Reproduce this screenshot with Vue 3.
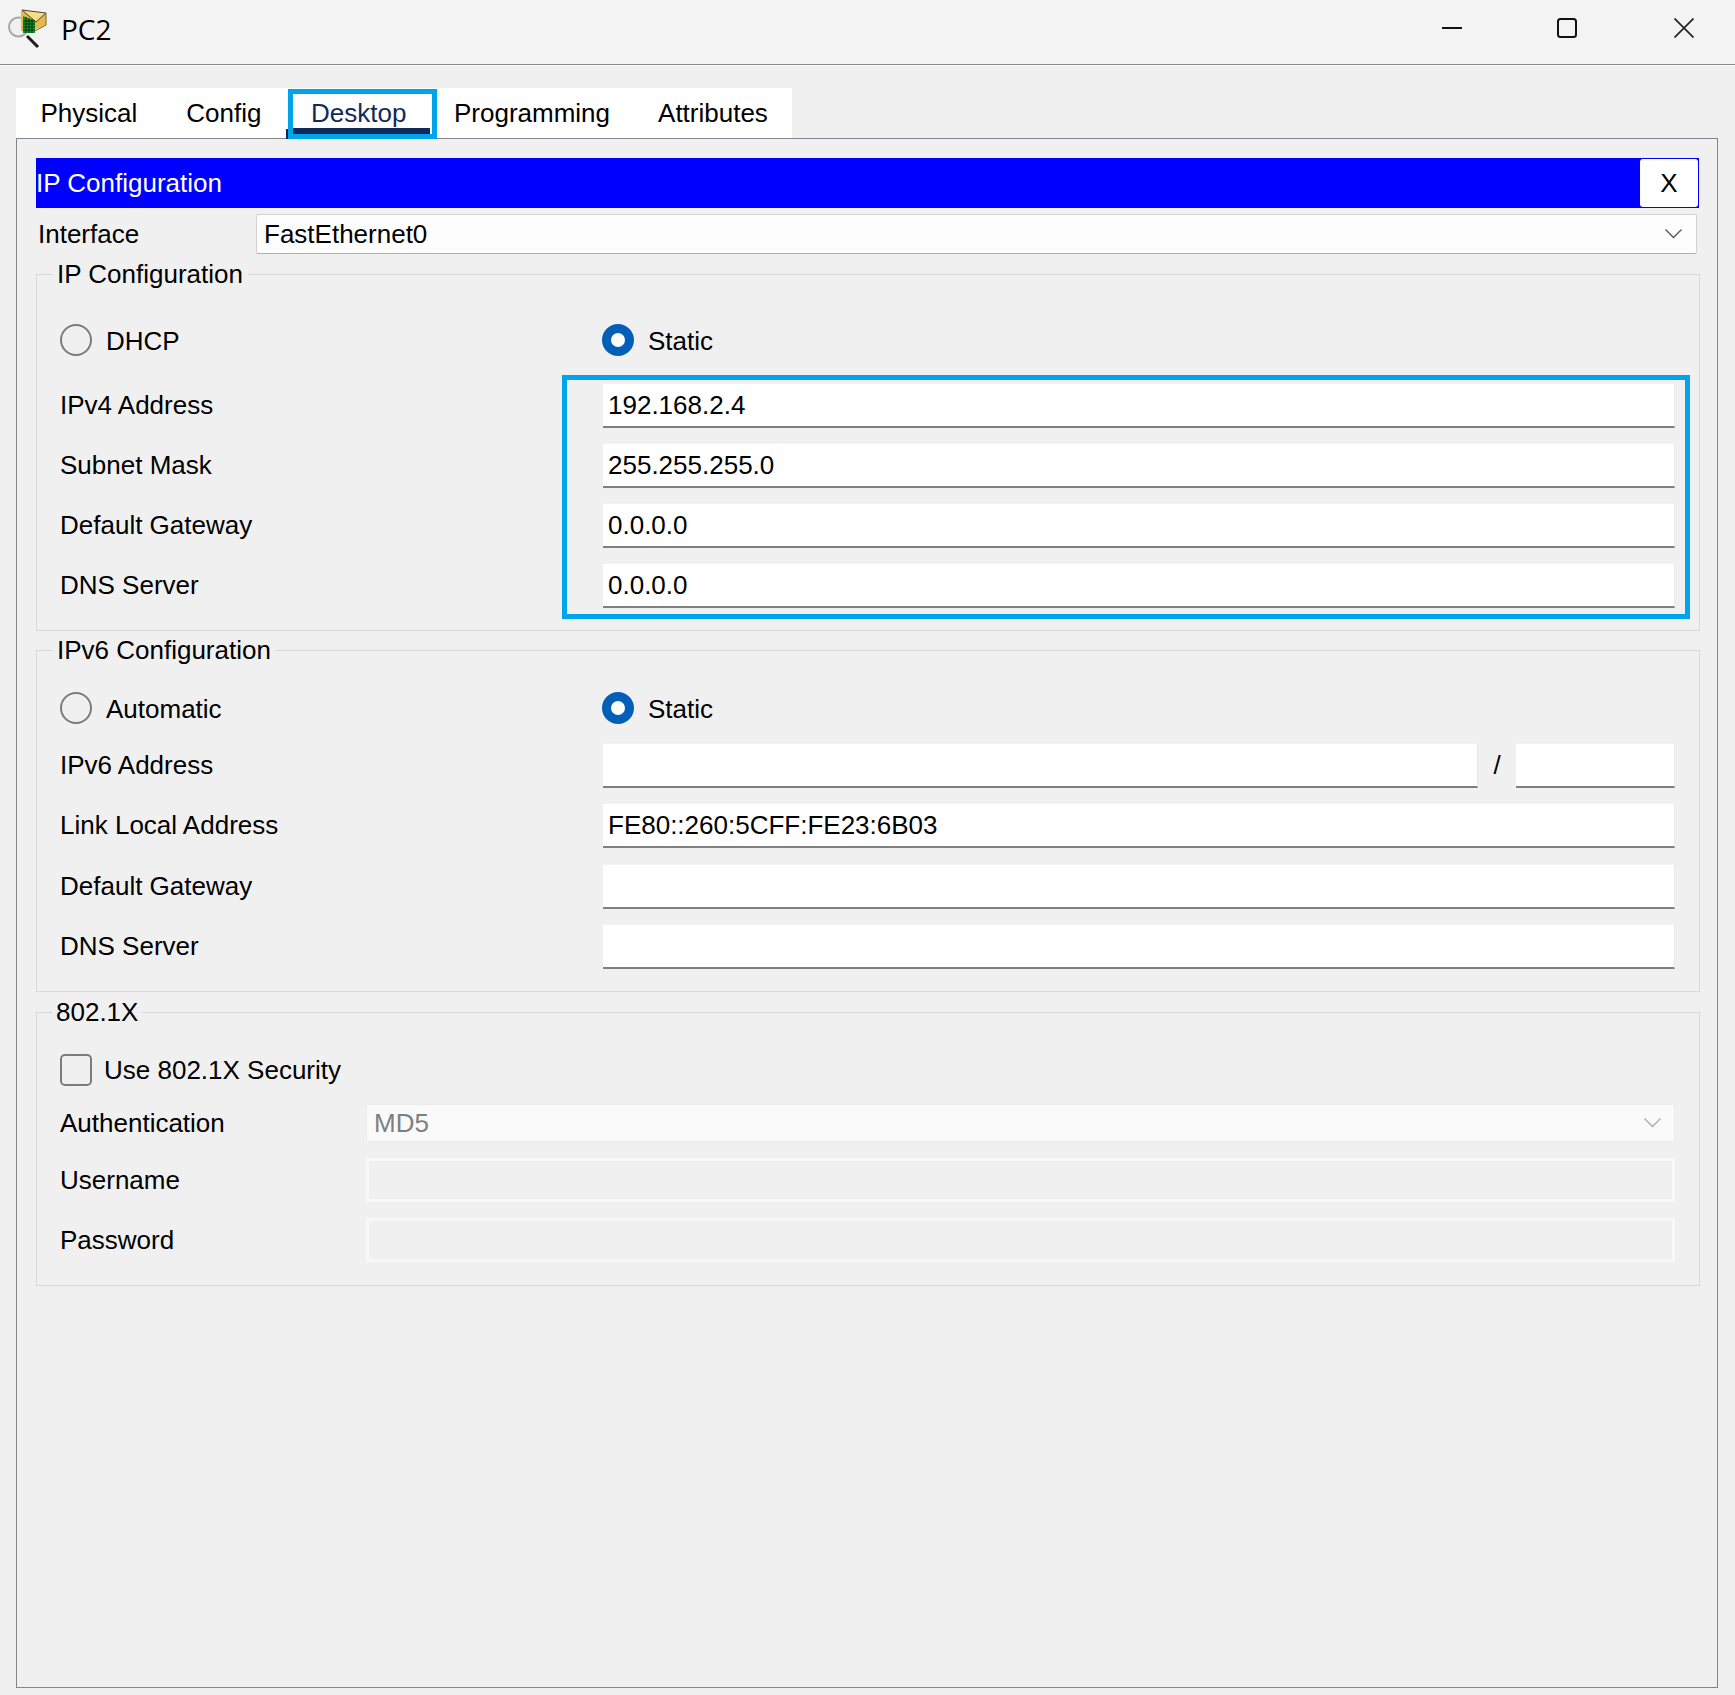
<script setup>
const tabs = ['Physical', 'Config', 'Desktop', 'Programming', 'Attributes']

const ipv4Rows = [
  { label: 'IPv4 Address', value: '192.168.2.4' },
  { label: 'Subnet Mask', value: '255.255.255.0' },
  { label: 'Default Gateway', value: '0.0.0.0' },
  { label: 'DNS Server', value: '0.0.0.0' },
]
</script>

<template>
  <div class="window">
    <header class="titlebar">
      <svg class="app-icon" width="40" height="40" viewBox="0 0 40 40">
        <circle cx="10.5" cy="19" r="9.5" fill="#eef1ee" stroke="#a5a9a7" stroke-width="2" />
        <path d="M13 2 L38 5 L38 17 L19 25 L13 23 Z" fill="#e7b94a" />
        <path d="M14 2 L38 5 L28 14 Z" fill="#f6dd8e" stroke="#4a4526" stroke-width="1" />
        <path d="M15 8 L27 13 L27 25 L15 25 Z" fill="#0c9a2b" />
        <path d="M18 9 V25 M21 10 V25 M24 11 V25 M15 13 H27 M15 16 H27 M15 19 H27 M15 22 H27" stroke="#07300f" stroke-width="1" />
        <path d="M38 5 V17 L27 23" fill="none" stroke="#7a6626" stroke-width="1" />
        <path d="M19 28 L30 39" stroke="#1c1c1c" stroke-width="3" />
      </svg>
      <span class="title">PC2</span>
      <div class="win-controls">
        <svg width="20" height="20" viewBox="0 0 20 20"><path d="M0 10 H20" stroke="#111" stroke-width="2" /></svg>
        <svg width="20" height="20" viewBox="0 0 20 20"><rect x="1" y="1" width="18" height="18" rx="2.5" fill="none" stroke="#111" stroke-width="2" /></svg>
        <svg class="close-icon" width="20" height="20" viewBox="0 0 20 20"><path d="M0.5 0.5 L19.5 19.5 M19.5 0.5 L0.5 19.5" stroke="#222" stroke-width="1.7" /></svg>
      </div>
    </header>

    <nav class="tabs">
      <div
        v-for="tab in tabs"
        :key="tab"
        class="tab"
        :class="{ active: tab === 'Desktop' }"
      >
        {{ tab }}
      </div>
    </nav>

    <main class="panel">
      <div class="dialog-head">
        <span>IP Configuration</span>
        <button class="close-btn">X</button>
      </div>

      <div class="interface-row">
        <span class="interface-label">Interface</span>
        <div class="select">
          <span>FastEthernet0</span>
          <svg width="17" height="10" viewBox="0 0 17 10"><path d="M0.5 0.5 L8.5 8.5 L16.5 0.5" fill="none" stroke="#555" stroke-width="1.3" /></svg>
        </div>
      </div>

      <fieldset class="group group-v4">
        <legend>IP Configuration</legend>
        <div class="radio-row">
          <div class="radio-cell"><i class="radio"></i><span>DHCP</span></div>
          <div class="radio-cell"><i class="radio on"></i><span>Static</span></div>
        </div>
        <div class="highlighted">
          <div class="highlight-box"></div>
          <div v-for="row in ipv4Rows" :key="row.label" class="row">
            <span class="row-label">{{ row.label }}</span>
            <div class="field">{{ row.value }}</div>
          </div>
        </div>
      </fieldset>

      <fieldset class="group group-v6">
        <legend>IPv6 Configuration</legend>
        <div class="radio-row">
          <div class="radio-cell"><i class="radio"></i><span>Automatic</span></div>
          <div class="radio-cell"><i class="radio on"></i><span>Static</span></div>
        </div>
        <div class="row">
          <span class="row-label">IPv6 Address</span>
          <div class="field-pair">
            <div class="field"></div>
            <span class="slash">/</span>
            <div class="field prefix"></div>
          </div>
        </div>
        <div class="row">
          <span class="row-label">Link Local Address</span>
          <div class="field">FE80::260:5CFF:FE23:6B03</div>
        </div>
        <div class="row tall-gap">
          <span class="row-label">Default Gateway</span>
          <div class="field"></div>
        </div>
        <div class="row">
          <span class="row-label">DNS Server</span>
          <div class="field"></div>
        </div>
      </fieldset>

      <fieldset class="group group-8021x">
        <legend class="legend-short">802.1X</legend>
        <div class="check-row"><i class="checkbox"></i><span>Use 802.1X Security</span></div>
        <div class="row auth-row">
          <span class="row-label short">Authentication</span>
          <div class="select disabled">
            <span>MD5</span>
            <svg width="17" height="10" viewBox="0 0 17 10"><path d="M0.5 0.5 L8.5 8.5 L16.5 0.5" fill="none" stroke="#aaa" stroke-width="1.3" /></svg>
          </div>
        </div>
        <div class="row cred-row">
          <span class="row-label short">Username</span>
          <div class="field off"></div>
        </div>
        <div class="row cred-row">
          <span class="row-label short">Password</span>
          <div class="field off"></div>
        </div>
      </fieldset>
    </main>
  </div>
</template>

<style>
html,
body {
  margin: 0;
  background: #f0f0f0;
}
</style>

<style scoped>
.window {
  width: 1735px;
  height: 1695px;
  background: #f0f0f0;
  font-family: "Liberation Sans", Arial, sans-serif;
  font-size: 26px;
  color: #000;
  overflow: hidden;
  box-sizing: border-box;
}

.titlebar {
  display: flex;
  align-items: center;
  height: 64px;
  background: #f3f3f3;
  border-bottom: 1px solid #868a90;
  box-shadow: 0 1px 0 #fff;
  padding-left: 8px;
  padding-right: 41px;
}

.app-icon {
  margin-bottom: 8px;
  flex: none;
}

.title {
  margin-left: 13px;
  margin-bottom: 6px;
  font-family: "Open Sans", sans-serif;
  font-size: 28px;
}

.win-controls {
  margin-left: auto;
  display: flex;
  align-items: center;
  gap: 95px;
  margin-bottom: 8px;
}

.win-controls svg {
  display: block;
}

.win-controls .close-icon {
  margin-left: 2px;
}

.tabs {
  display: flex;
  width: 776px;
  height: 50px;
  margin: 23px 0 0 16px;
  background: #fff;
}

.tab {
  flex: none;
  padding: 0 24.5px;
  line-height: 50px;
  white-space: nowrap;
}

.tab:last-child {
  margin-left: -1px;
}

.tab.active {
  position: relative;
  box-sizing: border-box;
  width: 149px;
  height: 50px;
  margin: 1px -7.5px 0 2px;
  padding: 0 0 0 18px;
  line-height: 38px;
  border: 5px solid #00a4ea;
  color: #0f2a5a;
}

.tab.active::after {
  content: "";
  position: absolute;
  left: 0;
  right: 2px;
  bottom: 0;
  height: 6px;
  background: #0f2a5a;
}

.tab.active::before {
  content: "";
  position: absolute;
  left: -7px;
  bottom: -5px;
  width: 2px;
  height: 10px;
  background: #0f2a5a;
}

.panel {
  box-sizing: border-box;
  width: 1702px;
  height: 1550px;
  margin-left: 16px;
  padding: 19px 17px 0 19px;
  border: 1px solid #83858c;
}

.dialog-head {
  display: flex;
  align-items: center;
  justify-content: space-between;
  width: 1663px;
  height: 50px;
  box-sizing: border-box;
  padding: 1px 1px 1px 0;
  background: #0000ff;
  color: #fff;
}

.close-btn {
  width: 58px;
  height: 48px;
  padding: 0;
  background: #fff;
  border: none;
  border-radius: 3px;
  font: inherit;
  color: #000;
}

.interface-row {
  display: flex;
  align-items: center;
  margin-top: 6px;
}

.interface-label {
  width: 220px;
  padding-left: 2px;
  box-sizing: border-box;
}

.select {
  flex: 1;
  display: flex;
  align-items: center;
  justify-content: space-between;
  box-sizing: border-box;
  height: 40px;
  margin-right: 3px;
  padding: 0 14px 0 7px;
  background: #fdfdfd;
  border: 1px solid #d2d2d2;
  border-bottom-color: #b0b0b0;
  border-radius: 2px;
}

.select.disabled {
  height: 38px;
  margin-right: 0;
  padding: 0 13px 0 7px;
  background: #fafafa;
  border-color: #ececec;
  color: #7f7f7f;
}

.group {
  box-sizing: border-box;
  width: 1664px;
  margin: 5px 0 0;
  padding: 0 24px 0 23px;
  border: 1px solid #d8d8d8;
  min-width: 0;
}

.group legend {
  margin-left: -8px;
  padding: 0 5px;
  height: 30px;
  line-height: 30px;
}

.group legend.legend-short {
  padding: 0 4px;
}

.group-v4 {
  padding-bottom: 22px;
}

.group-v6 {
  margin-top: 4px;
  padding-bottom: 22px;
}

.group-8021x {
  margin-top: 5px;
  padding-bottom: 23px;
}

.radio-row {
  display: flex;
  align-items: center;
  height: 32px;
  margin-top: 35px;
  margin-bottom: 27px;
}

.group-v6 .radio-row {
  margin-top: 27px;
  margin-bottom: 19px;
}

.radio-cell {
  display: flex;
  align-items: center;
  gap: 14px;
  width: 542px;
}

.radio-cell span {
  padding-top: 2px;
}

.radio {
  box-sizing: border-box;
  width: 32px;
  height: 32px;
  border: 2px solid #7c7c7c;
  border-radius: 50%;
}

.radio.on {
  border: 9px solid #0060b8;
  background: #fff;
}

.row {
  display: flex;
  align-items: center;
  height: 45px;
  margin-bottom: 15px;
}

.row:last-child {
  margin-bottom: 0;
}

.row.tall-gap {
  margin-top: 16px;
}

.row-label {
  width: 543px;
  flex: none;
}

.row-label.short {
  width: 306px;
}

.field {
  flex: 1;
  box-sizing: border-box;
  height: 45px;
  line-height: 42px;
  padding-left: 5px;
  background: #fff;
  border: 1px solid #f4f4f4;
  border-right-color: #e8e8e8;
  border-left: none;
  border-bottom: 2px solid #808080;
}

.field-pair {
  flex: 1;
  display: flex;
  align-items: center;
}

.field-pair .slash {
  width: 38px;
  text-align: center;
}

.field.prefix {
  flex: none;
  width: 159px;
}

.field.off {
  height: 44px;
  background: #f0f0f0;
  border: 3px solid #f8f8f8;
}

.highlighted {
  position: relative;
}

.highlight-box {
  position: absolute;
  top: -8px;
  bottom: -11px;
  left: 502px;
  right: -15px;
  border: 5px solid #00a4ea;
  pointer-events: none;
}

.check-row {
  display: flex;
  align-items: center;
  gap: 12px;
  height: 32px;
  margin-top: 27px;
  margin-bottom: 18px;
}

.checkbox {
  box-sizing: border-box;
  width: 32px;
  height: 32px;
  border: 2px solid #7c7c7c;
  border-radius: 5px;
}

.auth-row {
  height: 38px;
  margin-bottom: 16px;
}

.cred-row {
  height: 44px;
  margin-bottom: 16px;
}
</style>
